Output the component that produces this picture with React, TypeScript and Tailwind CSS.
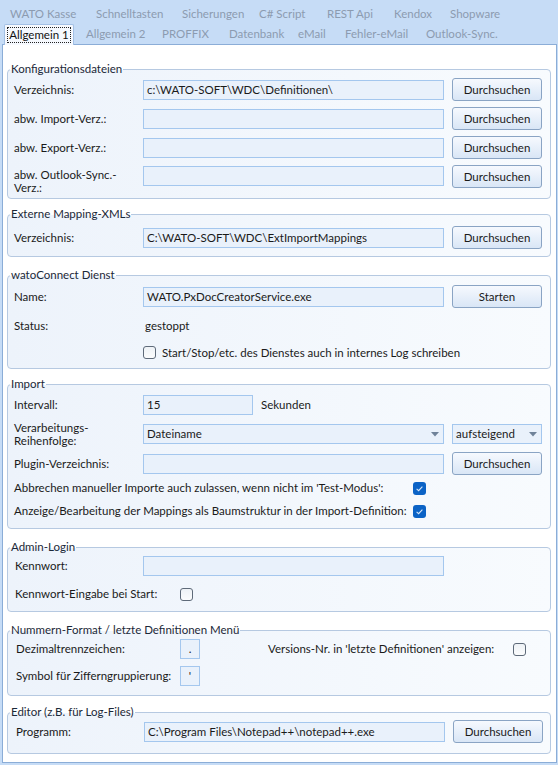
import React from "react";

function Group({ title, className, children }: { title: string; className: string; children: React.ReactNode }) {
  return (
    <fieldset
      className={
        "w-[544px] rounded-[4px] border border-[#b6c9e1] bg-linear-to-r from-[#edf3fb] to-[#f8fbfe] " + className
      }
    >
      <legend className="ml-[2px] px-[1px] text-[11.5px] leading-[16px] text-[#1b2838]">{title}</legend>
      {children}
    </fieldset>
  );
}

function Input({ value, className }: { value?: string; className: string }) {
  return (
    <div
      className={
        "flex h-[20px] items-center border border-[#a4c7ee] bg-[#e9f1fb] px-[3px] text-[11.5px] leading-[16px] text-[#1a1a1a] " +
        className
      }
    >
      {value}
    </div>
  );
}

function Btn({ label, className }: { label: string; className?: string }) {
  return (
    <div
      className={
        "ml-[8px] flex h-[23px] w-[90px] items-center justify-center rounded-[3px] border border-[#8aa4c4] bg-linear-to-b from-[#f6f9fe] to-[#d9e6f6] text-[11.5px] leading-[16px] text-[#1a1a1a] " +
        (className ?? "")
      }
    >
      {label}
    </div>
  );
}

function Check({ checked }: { checked?: boolean }) {
  if (checked) {
    return (
      <div className="flex h-[13px] w-[13px] items-center justify-center rounded-[3px] bg-[#0b63c6]">
        <svg width="9" height="9" viewBox="0 0 9 9">
          <path d="M1.6 4.9 L3.6 6.7 L7.4 2.6" stroke="#d7e6f8" strokeWidth="1.1" fill="none" />
        </svg>
      </div>
    );
  }
  return <div className="h-[13px] w-[13px] rounded-[3px] border border-[#5e6a79] bg-linear-to-b from-[#eef2f6] to-[#fbfcfd]" />;
}

function Arrow() {
  return (
    <svg width="8" height="5" viewBox="0 0 8 5">
      <path d="M0 0 H8 L4 4.5 Z" fill="#6f8299" />
    </svg>
  );
}

export default function App() {
  return (
    <div className="h-[765px] w-[558px] overflow-hidden bg-[#c6dcf6] font-['Lato',sans-serif] text-[11.5px] text-[#1a1a1a]">
      {/* tab row 1 */}
      <div className="flex h-[24px] pl-[10px] pt-[6px] text-[11.5px] leading-[16px] text-[#8c9bb0]">
        <span className="w-[86px]">WATO Kasse</span>
        <span className="w-[86px]">Schnelltasten</span>
        <span className="w-[77px]">Sicherungen</span>
        <span className="w-[68px]">C# Script</span>
        <span className="w-[67px]">REST Api</span>
        <span className="w-[56px]">Kendox</span>
        <span>Shopware</span>
      </div>
      {/* tab row 2 */}
      <div className="flex h-[20px] items-start pl-[4px] text-[11.5px] leading-[16px] text-[#8c9bb0]">
        <div className="relative z-10 flex h-[21px] w-[70px] items-center justify-center rounded-t-[2px] border border-b-0 border-[#a3c0e5] bg-[#f6f9fe] text-[#111]">
          <span className="border border-dotted border-[#222] px-[1px] leading-[14px]">Allgemein 1</span>
        </div>
        <div className="ml-[12px] flex pt-[2px]">
          <span className="w-[76px]">Allgemein 2</span>
          <span className="w-[67px]">PROFFIX</span>
          <span className="w-[69px]">Datenbank</span>
          <span className="w-[47px]">eMail</span>
          <span className="w-[81px]">Fehler-eMail</span>
          <span>Outlook-Sync.</span>
        </div>
      </div>
      {/* panel */}
      <div className="ml-[2px] flex h-[719px] w-[555px] flex-col border border-[#8badd7] bg-white pl-[4px] pt-[16px]">
        {/* Konfigurationsdateien */}
        <Group title="Konfigurationsdateien" className="pb-[10px]">
          <div className="flex flex-col gap-[6px] pl-[6px] pt-[1px]">
            <div className="flex h-[23px] items-center">
              <div className="w-[129px]">Verzeichnis:</div>
              <Input value="c:\WATO-SOFT\WDC\Definitionen\" className="w-[301px]" />
              <Btn label="Durchsuchen" />
            </div>
            <div className="flex h-[23px] items-center">
              <div className="w-[129px]">abw. Import-Verz.:</div>
              <Input className="w-[301px]" />
              <Btn label="Durchsuchen" />
            </div>
            <div className="flex h-[23px] items-center">
              <div className="w-[129px]">abw. Export-Verz.:</div>
              <Input className="w-[301px]" />
              <Btn label="Durchsuchen" />
            </div>
            <div className="flex h-[23px] items-start">
              <div className="w-[129px] pt-[3px] leading-[13px]">
                abw. Outlook-Sync.-
                <br />
                Verz.:
              </div>
              <Input className="mt-[1px] w-[301px]" />
              <Btn label="Durchsuchen" />
            </div>
          </div>
        </Group>

        {/* Externe Mapping-XMLs */}
        <Group title="Externe Mapping-XMLs" className="mt-[7px] pb-[7px]">
          <div className="mt-[4px] flex h-[23px] items-center pl-[6px]">
            <div className="w-[129px]">Verzeichnis:</div>
            <Input value="C:\WATO-SOFT\WDC\ExtImportMappings" className="w-[301px]" />
            <Btn label="Durchsuchen" />
          </div>
        </Group>

        {/* watoConnect Dienst */}
        <Group title="watoConnect Dienst" className="mt-[10px] pb-[4px]">
          <div className="flex flex-col pl-[6px] pt-[2px]">
            <div className="flex h-[23px] items-center">
              <div className="w-[129px]">Name:</div>
              <Input value="WATO.PxDocCreatorService.exe" className="w-[301px]" />
              <Btn label="Starten" />
            </div>
            <div className="mt-[6px] flex h-[23px] items-center">
              <div className="w-[131px]">Status:</div>
              <div>gestoppt</div>
            </div>
            <div className="mt-[4px] flex h-[23px] items-center">
              <div className="w-[129px]" />
              <Check />
              <div className="ml-[6px]">Start/Stop/etc. des Dienstes auch in internes Log schreiben</div>
            </div>
          </div>
        </Group>

        {/* Import */}
        <Group title="Import" className="mt-[7px] pb-[6px]">
          <div className="flex flex-col pl-[6px] pt-[2px]">
            <div className="flex h-[22px] items-center">
              <div className="w-[129px]">Intervall:</div>
              <Input value="15" className="w-[110px]" />
              <div className="ml-[8px]">Sekunden</div>
            </div>
            <div className="mt-[7px] flex h-[22px] items-center">
              <div className="w-[129px] leading-[13px]">
                Verarbeitungs-
                <br />
                Reihenfolge:
              </div>
              <div className="flex h-[20px] w-[301px] items-center justify-between border border-[#a4c7ee] bg-[#e9f1fb] pl-[3px] pr-[4px]">
                <span>Dateiname</span>
                <Arrow />
              </div>
              <div className="ml-[8px] flex h-[20px] w-[90px] items-center justify-between border border-[#a4c7ee] bg-[#e9f1fb] pl-[3px] pr-[4px]">
                <span>aufsteigend</span>
                <Arrow />
              </div>
            </div>
            <div className="mt-[7px] flex h-[23px] items-center">
              <div className="w-[129px]">Plugin-Verzeichnis:</div>
              <Input className="w-[301px]" />
              <Btn label="Durchsuchen" />
            </div>
            <div className="mt-[2px] flex h-[22px] items-center">
              <div className="w-[399px] whitespace-nowrap">Abbrechen manueller Importe auch zulassen, wenn nicht im 'Test-Modus':</div>
              <Check checked />
            </div>
            <div className="mt-[1px] flex h-[22px] items-center">
              <div className="w-[399px] whitespace-nowrap">Anzeige/Bearbeitung der Mappings als Baumstruktur in der Import-Definition:</div>
              <Check checked />
            </div>
          </div>
        </Group>

        {/* Admin-Login */}
        <Group title="Admin-Login" className="mt-[10px] pb-[6px]">
          <div className="flex flex-col pl-[7px]">
            <div className="flex h-[22px] items-center">
              <div className="w-[128px]">Kennwort:</div>
              <Input className="w-[301px]" />
            </div>
            <div className="mt-[6px] flex h-[22px] items-center">
              <div className="w-[165px]">Kennwort-Eingabe bei Start:</div>
              <Check />
            </div>
          </div>
        </Group>

        {/* Nummern-Format */}
        <Group title="Nummern-Format / letzte Definitionen Menü" className="mt-[10px] pb-[8px]">
          <div className="flex flex-col pl-[8px]">
            <div className="flex h-[22px] items-center">
              <div className="w-[164px]">Dezimaltrennzeichen:</div>
              <Input value="." className="w-[20px] justify-center px-0" />
              <div className="ml-[68px] w-[245px] whitespace-nowrap">Versions-Nr. in 'letzte Definitionen' anzeigen:</div>
              <Check />
            </div>
            <div className="mt-[5px] flex h-[22px] items-center">
              <div className="w-[164px] whitespace-nowrap">Symbol für Zifferngruppierung:</div>
              <Input value="'" className="w-[20px] justify-center px-0" />
            </div>
          </div>
        </Group>

        {/* Editor */}
        <Group title="Editor (z.B. für Log-Files)" className="mt-[8px] pb-[10px]">
          <div className="flex h-[23px] items-center pl-[8px]">
            <div className="w-[128px]">Programm:</div>
            <Input value="C:\Program Files\Notepad++\notepad++.exe" className="w-[301px]" />
            <Btn label="Durchsuchen" />
          </div>
        </Group>
      </div>
    </div>
  );
}
